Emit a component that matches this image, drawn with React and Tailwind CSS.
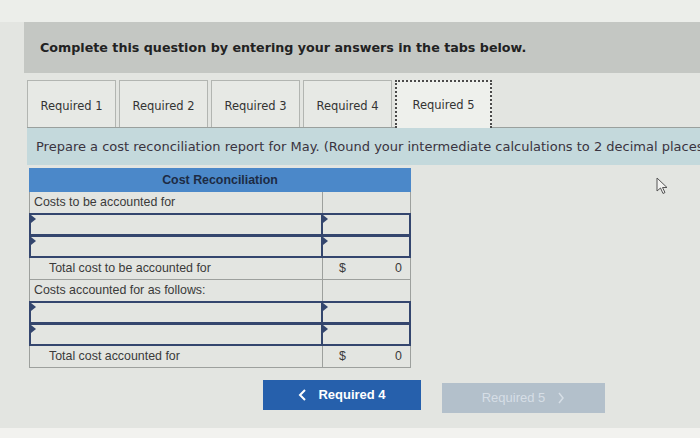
import React from "react";

const TABS = ["Required 1", "Required 2", "Required 3", "Required 4"];

function TextRow({ label, indent, total }) {
  return (
    <div className="flex h-[22px]">
      <div
        className={`w-[294px] border border-t-0 border-[#9da09d] flex items-center ${indent ? "pl-[19px]" : "pl-[4px]"}`}
      >
        {label}
      </div>
      <div className="w-[88px] border border-t-0 border-l-0 border-[#9da09d] flex items-center justify-between px-[8px]">
        {total && (
          <>
            <span className="ml-[8px]">$</span>
            <span>0</span>
          </>
        )}
      </div>
    </div>
  );
}

function InputRow() {
  return (
    <div className="flex h-[22px]">
      <div className="relative w-[294px] border-2 border-[#34466e] -mt-px">
        <span className="absolute left-0 top-0 w-0 h-0 border-t-[4px] border-b-[4px] border-l-[5px] border-t-transparent border-b-transparent border-l-[#34466e]" />
      </div>
      <div className="relative w-[88px] border-2 border-l-0 border-[#34466e] -mt-px">
        <span className="absolute left-0 top-0 w-0 h-0 border-t-[4px] border-b-[4px] border-l-[5px] border-t-transparent border-b-transparent border-l-[#34466e]" />
      </div>
    </div>
  );
}

export default function App() {
  return (
    <div className="w-[700px] h-[438px] bg-[#e3e5e1] overflow-hidden relative font-['DejaVu_Sans',sans-serif] text-[#2b2b2b]">
      <div className="h-[22px] bg-[#eceeea]" />
      <div className="ml-[24px] h-[51px] bg-[#c4c7c3] flex items-center pl-[16px] text-[12.7px] font-bold text-[#222]">
        Complete this question by entering your answers in the tabs below.
      </div>

      <div className="ml-[27px] mt-[8px] flex items-end gap-[3px] border-b border-[#9aa09d] h-[47px]">
        {TABS.map(t => (
          <div
            key={t}
            className="w-[89px] h-[47px] pt-[5px] border border-b-0 border-[#b2b5b1] bg-[#e7e9e5] flex items-center justify-center text-[11.5px] text-[#333]"
          >
            {t}
          </div>
        ))}
        <div className="w-[97px] h-[48px] -mb-px pt-[2px] border-2 border-b-0 border-dotted border-[#4a4a4a] bg-[#eef0ec] flex items-center justify-center text-[11.5px] text-[#333]">
          Required 5
        </div>
      </div>

      <div className="ml-[27px] h-[37px] bg-[#c4d9dc] flex items-center pl-[9px] pt-[1px] whitespace-nowrap text-[13px] text-[#3a3440]">
        Prepare a cost reconciliation report for May. (Round your intermediate calculations to 2 decimal places
      </div>

      <div className="ml-[29px] mt-[3px] w-[382px] font-['Liberation_Sans',sans-serif] text-[12.4px] text-[#3a3a3a]">
        <div className="h-[24px] bg-[#4b88c9] flex items-center justify-center font-bold text-[#1d2b44]">
          Cost Reconciliation
        </div>
        <TextRow label="Costs to be accounted for" />
        <InputRow />
        <InputRow />
        <TextRow label="Total cost to be accounted for" indent total />
        <TextRow label="Costs accounted for as follows:" />
        <InputRow />
        <InputRow />
        <TextRow label="Total cost accounted for" indent total />
      </div>

      <div className="flex items-start mt-[12px] ml-[263px] gap-[21px] font-['Liberation_Sans',sans-serif] font-bold text-[13px]">
        <div className="w-[158px] h-[30px] bg-[#2660ac] text-white flex items-center justify-center gap-[10px]">
          <svg width="10" height="12" viewBox="0 0 10 12">
            <path d="M7 1 L2 6 L7 11" fill="none" stroke="white" strokeWidth="2" />
          </svg>
          <span>Required 4</span>
        </div>
        <div className="mt-[3px] w-[163px] h-[30px] bg-[#b3c0cb] text-[#d6dee6] flex items-center justify-center gap-[12px] font-normal">
          <span>Required 5</span>
          <svg width="8" height="12" viewBox="0 0 8 12">
            <path d="M2 1 L6 6 L2 11" fill="none" stroke="#d6dee6" strokeWidth="1.5" />
          </svg>
        </div>
      </div>

      <svg className="absolute left-[656px] top-[177px]" width="14" height="18" viewBox="0 0 14 18">
        <path d="M1 1 L1 14 L4.5 11 L7 16.5 L9 15.5 L6.5 10.5 L11 10.5 Z" fill="#f2f2f0" stroke="#555" strokeWidth="1" />
      </svg>

      <div className="absolute left-0 bottom-0 w-full h-[10px] bg-[#f2f2ef]" />
    </div>
  );
}
